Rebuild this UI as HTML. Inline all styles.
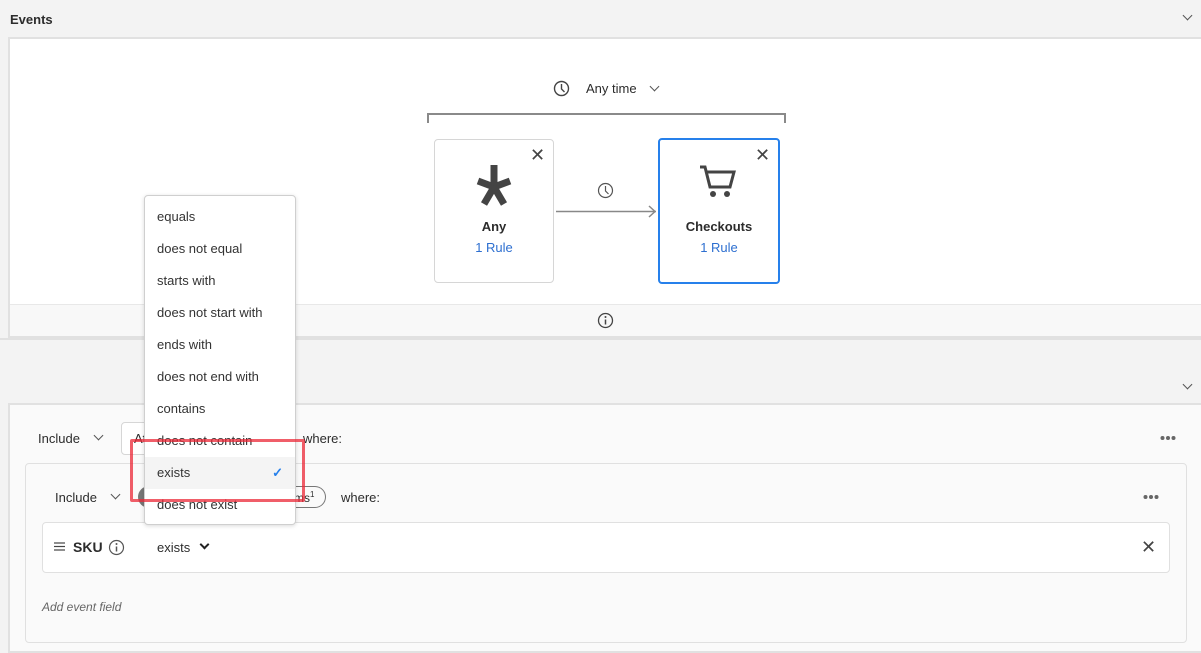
<!DOCTYPE html>
<html><head><style>
*{box-sizing:border-box;margin:0;padding:0}
body{width:1201px;height:645px;overflow:hidden;background:#f3f3f3;font-family:"Liberation Sans",sans-serif;color:#2c2c2c;font-size:13px;position:relative}
.a{position:absolute}
.chev{position:absolute;width:7px;height:7px;border-right:1.6px solid #555;border-bottom:1.6px solid #555;transform:rotate(45deg)}
.card{position:absolute;background:#fff;border:1px solid #d6d6d6;border-radius:4px;text-align:center}
.x{position:absolute;font-size:18px;color:#444;line-height:1}
.menu{position:absolute;left:144px;top:195px;width:152px;height:330px;background:#fff;border:1px solid #cfcfcf;border-radius:4px;box-shadow:0 1px 4px rgba(0,0,0,.15)}
.menu div{height:32px;line-height:32px;padding-left:12px;font-size:13px;color:#333}
</style></head><body>
<div class="a" style="left:10px;top:12px;font-weight:bold;font-size:13px">Events</div>
<div class="chev" style="left:1184px;top:12px"></div>
<div class="a" style="left:8px;top:37px;width:1200px;height:301px;background:#fff;border:2px solid #e1e1e1;border-right:none"></div>
<div class="a" style="left:10px;top:304px;width:1191px;height:32px;background:#f8f8f8;border-top:1px solid #e8e8e8"></div>
<svg class="a" style="left:597px;top:312px" width="17" height="17"><circle cx="8.5" cy="8.5" r="7" fill="none" stroke="#444" stroke-width="1.3"/><line x1="8.5" y1="7.5" x2="8.5" y2="12.5" stroke="#444" stroke-width="1.5"/><circle cx="8.5" cy="5" r="1" fill="#444"/></svg>
<svg class="a" style="left:553px;top:80px" width="17" height="17"><circle cx="8.5" cy="8.5" r="7" fill="none" stroke="#444" stroke-width="1.4"/><path d="M8.5 4v5l3 3" fill="none" stroke="#444" stroke-width="1.4"/></svg>
<div class="a" style="left:586px;top:81px">Any time</div>
<div class="chev" style="left:651px;top:83px"></div>
<div class="a" style="left:427px;top:113px;width:359px;height:10px;border:2px solid #8a8a8a;border-bottom:none"></div>
<div class="card" style="left:434px;top:139px;width:120px;height:144px"></div>
<svg class="a" style="left:474px;top:164px" width="40" height="42" viewBox="-20 -21 40 42"><g stroke="#444" stroke-width="7"><line x1="0" y1="2" x2="0" y2="-20"/><line x1="0" y1="2" x2="-16" y2="-4"/><line x1="0" y1="2" x2="16" y2="-4"/><line x1="0" y1="2" x2="-10" y2="19"/><line x1="0" y1="2" x2="10" y2="19"/></g></svg>
<div class="a" style="left:434px;top:219px;width:120px;text-align:center;font-weight:bold">Any</div>
<div class="a" style="left:434px;top:240px;width:120px;text-align:center;color:#2d6fd0">1 Rule</div>
<div class="x" style="left:530px;top:146px">✕</div>
<div class="card" style="left:658px;top:138px;width:122px;height:146px;border:2px solid #2680eb"></div>
<svg class="a" style="left:699px;top:164px" width="38" height="34" viewBox="0 0 38 34"><path d="M1 3h5l5 20h20l4-15H8" fill="none" stroke="#444" stroke-width="3"/><circle cx="14" cy="30" r="3" fill="#444"/><circle cx="28" cy="30" r="3" fill="#444"/></svg>
<div class="a" style="left:658px;top:219px;width:122px;text-align:center;font-weight:bold">Checkouts</div>
<div class="a" style="left:658px;top:240px;width:122px;text-align:center;color:#2d6fd0">1 Rule</div>
<div class="x" style="left:755px;top:146px">✕</div>
<svg class="a" style="left:597px;top:182px" width="17" height="17"><circle cx="8.5" cy="8.5" r="7" fill="none" stroke="#555" stroke-width="1.2"/><path d="M8.5 4v5l3 3" fill="none" stroke="#555" stroke-width="1.2"/></svg>
<svg class="a" style="left:556px;top:204px" width="104" height="15"><line x1="0" y1="7.5" x2="100" y2="7.5" stroke="#888" stroke-width="1.5"/><path d="M93 2l6 5.5-6 5.5" fill="none" stroke="#888" stroke-width="1.5"/></svg>
<div class="a" style="left:0;top:338px;width:1201px;height:65px;background:#f3f3f3;border-top:2px solid #e1e1e1"></div>
<div class="chev" style="left:1184px;top:381px"></div>
<div class="a" style="left:8px;top:403px;width:1200px;height:250px;background:#fafafa;border:2px solid #e1e1e1;border-right:none"></div>
<div class="a" style="left:38px;top:431px">Include</div>
<div class="chev" style="left:95px;top:432px"></div>
<div class="a" style="left:121px;top:422px;width:40px;height:33px;border:1px solid #d6d6d6;border-radius:4px;background:#fff;padding:8px 0 0 12px">At</div>
<div class="a" style="left:303px;top:431px">where:</div>
<svg class="a" style="left:1160px;top:435px" width="16" height="6"><circle cx="2.5" cy="3" r="2" fill="#666"/><circle cx="8" cy="3" r="2" fill="#666"/><circle cx="13.5" cy="3" r="2" fill="#666"/></svg>
<div class="a" style="left:25px;top:463px;width:1162px;height:180px;border:1px solid #e0e0e0;border-radius:4px;background:#fafafa"></div>
<div class="a" style="left:55px;top:490px">Include</div>
<div class="chev" style="left:112px;top:491px"></div>
<div class="a" style="left:138px;top:486px;width:20px;height:22px;background:#777;border-radius:11px 0 0 11px"></div>
<div class="a" style="left:270px;top:486px;width:56px;height:22px;border:1px solid #777;border-left:none;border-radius:0 11px 11px 0;font-size:12px;padding:3px 0 0 24px">ms<sup style="font-size:8px">1</sup></div>
<div class="a" style="left:341px;top:490px">where:</div>
<svg class="a" style="left:1143px;top:494px" width="16" height="6"><circle cx="2.5" cy="3" r="2" fill="#666"/><circle cx="8" cy="3" r="2" fill="#666"/><circle cx="13.5" cy="3" r="2" fill="#666"/></svg>
<div class="a" style="left:42px;top:522px;width:1128px;height:51px;background:#fff;border:1px solid #e0e0e0;border-radius:4px"></div>
<svg class="a" style="left:54px;top:542px" width="11" height="9"><g stroke="#444" stroke-width="1.2"><line x1="0" y1="1" x2="11" y2="1"/><line x1="0" y1="4.5" x2="11" y2="4.5"/><line x1="0" y1="8" x2="11" y2="8"/></g></svg>
<div class="a" style="left:73px;top:539px;font-weight:bold;font-size:14px">SKU</div>
<svg class="a" style="left:108px;top:539px" width="17" height="17"><circle cx="8.5" cy="8.5" r="7" fill="none" stroke="#555" stroke-width="1.2"/><line x1="8.5" y1="7.5" x2="8.5" y2="12.5" stroke="#555" stroke-width="1.5"/><circle cx="8.5" cy="5" r="1" fill="#555"/></svg>
<div class="a" style="left:157px;top:540px">exists</div>
<div class="chev" style="left:201px;top:541px;border-color:#222;border-width:2px"></div>
<div class="x" style="left:1141px;top:538px">✕</div>
<div class="a" style="left:42px;top:600px;font-style:italic;color:#666;font-size:12px">Add event field</div>
<div class="menu">
<div style="margin-top:5px">equals</div><div>does not equal</div><div>starts with</div><div>does not start with</div><div>ends with</div><div>does not end with</div><div>contains</div><div>does not contain</div>
<div style="background:#f4f4f4;position:relative">exists<span style="position:absolute;right:12px;color:#2680eb;font-weight:bold">✓</span></div>
<div>does not exist</div>
</div>
<div class="a" style="left:130px;top:439px;width:175px;height:63px;border:3px solid rgba(235,40,55,.75);border-radius:2px"></div>
</body></html>
